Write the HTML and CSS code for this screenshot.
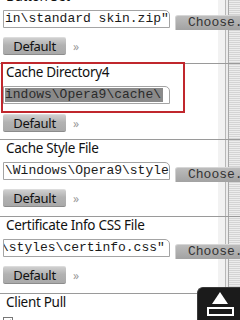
FILE: index.html
```html
<!DOCTYPE html>
<html lang="en">
<head>
	<meta charset="UTF-8">
	<title>Preferences</title>
	<link rel="stylesheet" href="styles.css">
</head>
<body>
	<div class="prefs">
		<div class="pref first">
			<p class="label">Button Set</p>
			<div class="row">
				<div class="field">in\standard skin.zip"</div>
				<div class="choose">Choose...</div>
			</div>
			<div class="actions">
				<div class="btn">Default</div><span class="more">&raquo;</span>
			</div>
		</div>

		<div class="pref focused">
			<div class="focus">
				<p class="label">Cache Directory4</p>
				<div class="row">
					<div class="field"><span class="sel">indows\Opera9\cache\</span></div>
				</div>
			</div>
			<div class="actions">
				<div class="btn">Default</div><span class="more">&raquo;</span>
			</div>
		</div>

		<div class="pref">
			<p class="label">Cache Style File</p>
			<div class="row">
				<div class="field">\Windows\Opera9\styles\cache.css"</div>
				<div class="choose">Choose...</div>
			</div>
			<div class="actions">
				<div class="btn">Default</div><span class="more">&raquo;</span>
			</div>
		</div>

		<div class="pref">
			<p class="label">Certificate Info CSS File</p>
			<div class="row">
				<div class="field shifted">\styles\certinfo.css"</div>
				<div class="choose">Choose...</div>
			</div>
			<div class="actions">
				<div class="btn">Default</div><span class="more">&raquo;</span>
			</div>
		</div>

		<div class="pref last">
			<p class="label">Client Pull</p>
			<div class="check-row">
				<span class="check">
					<svg width="8" height="7" viewBox="0 0 8 7"><path d="M1 4 L3 6 L7 1" fill="none" stroke="#333" stroke-width="1.4"/></svg>
				</span>
				<div class="btn light"></div>
			</div>
		</div>
	</div>

	<div class="eject">
		<svg width="43" height="33" viewBox="0 0 43 33">
			<path d="M23 5 L31 17 L15 17 Z" fill="#fff"/>
			<rect x="11" y="21" width="25" height="7" fill="none" stroke="#fff" stroke-width="2"/>
		</svg>
	</div>
</body>
</html>
```

FILE: styles.css
```css
* {
	box-sizing: border-box;
	padding: 0;
	margin: 0;
}

html, body {
	width: 240px;
	height: 320px;
	overflow: hidden;
}

body {
	position: relative;
	font-family: 'Noto Sans', 'Liberation Sans', sans-serif;
	color: #111;
	background:
		linear-gradient(to right, transparent 218px, #f2f2f2 218px, #f2f2f2 225px, #b8b8b8 225px, #b8b8b8 226px, #ececec 226px, #ececec 228px, #a8a8a8 228px, #a8a8a8 229px, transparent 229px),
		repeating-linear-gradient(to bottom, #d4d4d4 0, #d4d4d4 1px, #ededed 1px, #ededed 2px);
	background-color: #fff;
}

.prefs {
	width: 240px;
	background: linear-gradient(to right, #fff 218px, transparent 218px);
}

.pref {
	padding: 0 0 9px 3px;
	border-bottom: 1px solid #9a9a9a;
}

.pref.first {
	margin-top: -12px;
	padding-bottom: 8px;
}

.pref.focused {
	padding-bottom: 7px;
}

.pref.last {
	border-bottom: none;
}

.label {
	font-size: 13.5px;
	letter-spacing: -0.3px;
	line-height: 17px;
	padding-left: 3px;
	white-space: nowrap;
}

.row {
	display: flex;
	align-items: flex-start;
	margin-top: 5px;
	white-space: nowrap;
}

.field {
	width: 167px;
	height: 18px;
	flex: none;
	overflow: hidden;
	border: 1px solid #a4a4a4;
	border-top-right-radius: 5px;
	background: #fff;
	padding: 0 1px;
	font-family: 'Liberation Mono', monospace;
	font-size: 13px;
	line-height: 16px;
	color: #1a1a1a;
}

.field.shifted {
	text-indent: -4px;
}

.sel {
	display: inline-block;
	background: #8a8a8a;
	color: #2a2a2a;
	line-height: 14px;
	padding-right: 2px;
}

.choose {
	flex: none;
	width: 72px;
	height: 15px;
	margin: 5px 0 0 5px;
	padding-left: 12px;
	border-top: 1px solid #d6d6d6;
	border-left: 1px solid #d0d0d0;
	border-top-left-radius: 3px;
	background: linear-gradient(#bcbcbc, #a2a2a2);
	font-family: 'Liberation Mono', monospace;
	font-size: 13px;
	line-height: 13px;
	color: #333;
}

.actions {
	display: flex;
	align-items: center;
	margin-top: 7px;
}

.btn {
	width: 63px;
	height: 18px;
	border-top: 1px solid #dcdcdc;
	border-bottom: 1px solid #8c8c8c;
	border-radius: 2px;
	background: linear-gradient(#cfcfcf, #b2b2b2 45%, #a9a9a9);
	font-size: 13px;
	letter-spacing: -0.3px;
	line-height: 16px;
	text-align: center;
	color: #111;
}

.more {
	margin-left: 7px;
	font-size: 12px;
	color: #9a9a9a;
}

.focus {
	width: 180px;
	margin-top: 2px;
	padding-bottom: 7px;
	outline: 2px solid #c0272d;
	outline-offset: 0;
}

.focus .label {
	margin-top: -2px;
}

.focused .actions {
	margin-top: 3px;
}

.check-row {
	display: flex;
	align-items: flex-start;
	margin-top: 6px;
}

.check {
	display: flex;
	align-items: center;
	justify-content: center;
	width: 10px;
	height: 10px;
	border: 1px solid #777;
	background: #fff;
}

.btn.light {
	margin: 3px 0 0 12px;
	width: 60px;
	background: linear-gradient(#ececec, #d2d2d2);
	border-top: 1px solid #c4c4c4;
}

.eject {
	position: absolute;
	right: 0;
	bottom: 0;
	width: 43px;
	height: 33px;
	background: #1b1b1b;
	border-top-left-radius: 6px;
	border: 1px solid #3a3a3a;
	border-right: none;
	border-bottom: none;
}

.eject svg {
	display: block;
	margin: -1px 0 0 -1px;
}
```
